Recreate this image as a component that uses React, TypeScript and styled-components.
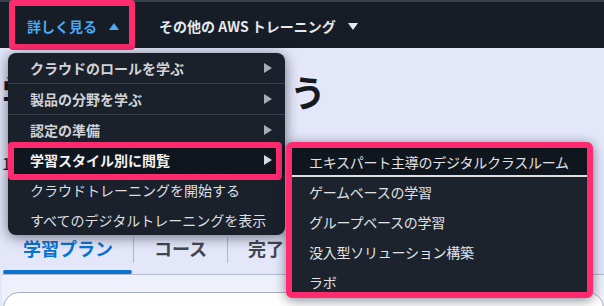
import React from "react";
import styled, { createGlobalStyle } from "styled-components";

const Global = createGlobalStyle`
  html, body { margin: 0; padding: 0; width: 604px; height: 306px; overflow: hidden; background: #e4e7f9; }
  body { font-family: "Noto Sans CJK JP", "Noto Sans", sans-serif; }
  * { box-sizing: border-box; }
`;

const PINK = "#ff2b6e";

const Page = styled.div`
  position: relative;
  width: 604px;
  height: 306px;
  overflow: hidden;
  background: #e4e7f9;
`;

const Nav = styled.nav`
  height: 48px;
  background: #161d26;
  border-top: 2px solid #3a414b;
  display: flex;
  align-items: center;
  gap: 40px;
  padding: 2px 0 0 27px;
`;

const NavItem = styled.div<{ $active?: boolean }>`
  position: relative;
  display: flex;
  align-items: center;
  gap: 12px;
  font-size: 14px;
  font-weight: 700;
  line-height: 20px;
  color: ${(p) => (p.$active ? "#4ca9f2" : "#e6e8eb")};
  &::after {
    content: ${(p) => (p.$active ? "''" : "none")};
    position: absolute;
    left: -18px;
    right: -16px;
    top: -16px;
    bottom: -14px;
    border: 6px solid ${PINK};
    border-radius: 4px;
  }
`;

const Main = styled.main`
  padding: 0 0 0 2px;
`;

const Heading = styled.h1`
  margin: 21px 0 0;
  font-size: 36px;
  line-height: 44px;
  font-weight: 700;
  color: #16191f;
  white-space: nowrap;
`;

const Subtitle = styled.p`
  margin: 38px 0 0;
  font-size: 16px;
  line-height: 24px;
  color: #16191f;
  white-space: nowrap;
`;

const Tabs = styled.div`
  margin-top: 57px;
  display: flex;
  align-items: flex-start;
  border-bottom: 1px solid #b4b9c6;
  padding-left: 1px;
`;

const Tab = styled.div<{ $active?: boolean }>`
  position: relative;
  height: 42px;
  padding: 4px 20px 0;
  font-size: 18px;
  line-height: 24px;
  font-weight: 700;
  color: ${(p) => (p.$active ? "#0972d3" : "#414750")};
  white-space: nowrap;
  &::after {
    content: ${(p) => (p.$active ? "''" : "none")};
    position: absolute;
    left: 0;
    right: 1px;
    bottom: 0;
    height: 4px;
    border-radius: 2px;
    background: #0972d3;
  }
`;

const TabDivider = styled.div`
  width: 1px;
  height: 26px;
  margin-top: 5px;
  background: #b2b7c2;
`;

const Lower = styled.div`
  background: #eef0fb;
  padding: 17px 0 0 1px;
`;

const Card = styled.div`
  height: 60px;
  background: #ffffff;
  border: 1px solid #a7aebd;
  border-radius: 16px;
`;

const Menu = styled.ul`
  position: absolute;
  left: 8px;
  top: 53px;
  width: 277px;
  margin: 0;
  padding: 0;
  list-style: none;
  background: #1b212b;
  border-radius: 8px;
  box-shadow: 0 2px 14px rgba(10, 15, 35, 0.55);
`;

const MenuRow = styled.li<{ $bold?: boolean; $sep?: boolean; $active?: boolean }>`
  position: relative;
  height: ${(p) => (p.$sep ? 31 : 30)}px;
  display: flex;
  align-items: center;
  justify-content: space-between;
  padding: 0 13px 0 22px;
  font-size: 14px;
  line-height: 20px;
  font-weight: ${(p) => (p.$bold ? 700 : 400)};
  color: ${(p) => (p.$active ? "#f2f3f5" : p.$bold ? "#cfd3d8" : "#dcdfe3")};
  border-bottom: ${(p) => (p.$sep ? "1px solid #3a414c" : "none")};
  background: ${(p) => (p.$active ? "#10161d" : "transparent")};
  white-space: nowrap;
  &::after {
    content: ${(p) => (p.$active ? "''" : "none")};
    position: absolute;
    left: 0;
    right: 3px;
    top: -3px;
    bottom: -5px;
    border: 6px solid ${PINK};
    border-radius: 4px;
  }
`;

const Sub = styled.ul`
  position: absolute;
  left: 286px;
  top: 142px;
  width: 307px;
  height: 156px;
  margin: 0;
  padding: 0;
  list-style: none;
  overflow: hidden;
  background: #1d232d;
  border: 6px solid ${PINK};
  border-radius: 6px;
  box-shadow: 0 2px 12px rgba(10, 15, 35, 0.5);
`;

const SubRow = styled.li<{ $active?: boolean }>`
  flex: none;
  height: ${(p) => (p.$active ? 29 : 30)}px;
  display: flex;
  align-items: center;
  padding-left: 17px;
  font-size: 14px;
  line-height: 20px;
  letter-spacing: -0.25px;
  color: #e0e3e6;
  white-space: nowrap;
  background: ${(p) => (p.$active ? "#10161d" : "transparent")};
  border-bottom: ${(p) => (p.$active ? "2px solid #dedfe1" : "none")};
`;

const Tri = ({ dir, color }: { dir: "up" | "down" | "right"; color: string }) => {
  if (dir === "right")
    return (
      <svg width="8" height="10" viewBox="0 0 8 10">
        <polygon points="0,0 8,5 0,10" fill={color} />
      </svg>
    );
  return (
    <svg width="10" height="7" viewBox="0 0 10 7">
      <polygon points={dir === "up" ? "0,7 5,0 10,7" : "0,0 10,0 5,7"} fill={color} />
    </svg>
  );
};

const menuItems = [
  { label: "クラウドのロールを学ぶ", bold: true, sep: true, arrow: true },
  { label: "製品の分野を学ぶ", bold: true, sep: true, arrow: true },
  { label: "認定の準備", bold: true, sep: false, arrow: true },
  { label: "学習スタイル別に閲覧", bold: true, sep: false, arrow: true, active: true },
  { label: "クラウドトレーニングを開始する", bold: false, sep: false, arrow: false },
  { label: "すべてのデジタルトレーニングを表示", bold: false, sep: false, arrow: false },
];

const subItems = [
  "エキスパート主導のデジタルクラスルーム",
  "ゲームベースの学習",
  "グループベースの学習",
  "没入型ソリューション構築",
  "ラボ",
];

export default function App() {
  return (
    <Page>
      <Global />
      <Nav>
        <NavItem $active>
          詳しく見る
          <Tri dir="up" color="#4ca9f2" />
        </NavItem>
        <NavItem>
          その他の AWS トレーニング
          <Tri dir="down" color="#e6e8eb" />
        </NavItem>
      </Nav>
      <Main>
        <Heading>学習を始めましょう</Heading>
        <Subtitle>1 つの場所でスキルを伸ばしましょう</Subtitle>
        <Tabs>
          <Tab $active>学習プラン</Tab>
          <TabDivider />
          <Tab>コース</Tab>
          <TabDivider />
          <Tab>完了</Tab>
        </Tabs>
        <Lower>
          <Card />
        </Lower>
      </Main>
      <Menu>
        {menuItems.map((m) => (
          <MenuRow key={m.label} $bold={m.bold} $sep={m.sep} $active={m.active}>
            <span>{m.label}</span>
            {m.arrow && <Tri dir="right" color={m.active ? "#d5d8dc" : "#a9aeb5"} />}
          </MenuRow>
        ))}
      </Menu>
      <Sub>
        {subItems.map((s, i) => (
          <SubRow key={s} $active={i === 0}>
            {s}
          </SubRow>
        ))}
      </Sub>
    </Page>
  );
}
